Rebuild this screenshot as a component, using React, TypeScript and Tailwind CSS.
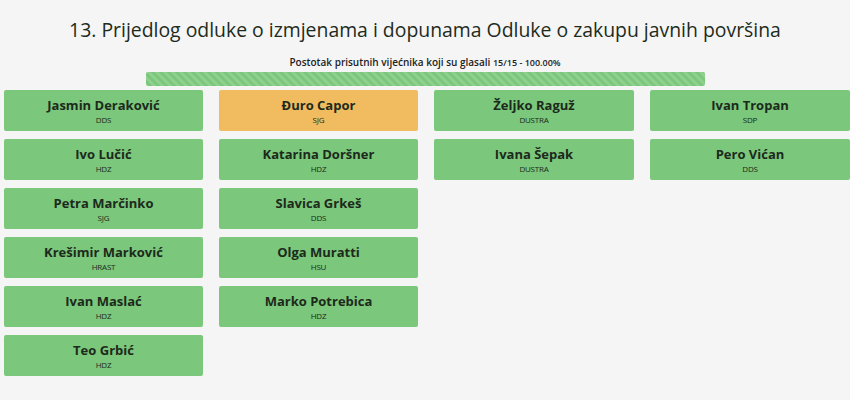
type Member = { name: string; party: string; abstain?: boolean };

const columns: Member[][] = [
  [
    { name: 'Jasmin Deraković', party: 'DDS' },
    { name: 'Ivo Lučić', party: 'HDZ' },
    { name: 'Petra Marčinko', party: 'SJG' },
    { name: 'Krešimir Marković', party: 'HRAST' },
    { name: 'Ivan Maslać', party: 'HDZ' },
    { name: 'Teo Grbić', party: 'HDZ' },
  ],
  [
    { name: 'Đuro Capor', party: 'SJG', abstain: true },
    { name: 'Katarina Doršner', party: 'HDZ' },
    { name: 'Slavica Grkeš', party: 'DDS' },
    { name: 'Olga Muratti', party: 'HSU' },
    { name: 'Marko Potrebica', party: 'HDZ' },
  ],
  [
    { name: 'Željko Raguž', party: 'DUSTRA' },
    { name: 'Ivana Šepak', party: 'DUSTRA' },
  ],
  [
    { name: 'Ivan Tropan', party: 'SDP' },
    { name: 'Pero Vićan', party: 'DDS' },
  ],
];

function VoteCard({ member }: { member: Member }) {
  return (
    <div
      className={`h-[41px] rounded-[2px] flex flex-col items-center justify-center text-[#1c2a1c] ${
        member.abstain ? 'bg-[#f0bc5f]' : 'bg-[#7bc77b]'
      }`}
    >
      <div className="text-[13px] font-bold leading-[16px] mt-[1px]">{member.name}</div>
      <div className="text-[8px] leading-[10px] mt-[2px] tracking-tight">{member.party}</div>
    </div>
  );
}

export default function App() {
  return (
    <div className="w-[850px] h-[400px] bg-[#f5f5f5] overflow-hidden font-['Open_Sans',sans-serif]">
      {/* Header */}
      <h1 className="pt-[16px] text-center text-[19.4px] font-normal leading-[28px] text-[#1d2b1d]">
        13. Prijedlog odluke o izmjenama i dopunama Odluke o zakupu javnih površina
      </h1>

      <div className="mt-[12px] text-center text-[10px] font-semibold leading-[12px] text-[#222]">
        Postotak prisutnih vijećnika koji su glasali{' '}
        <span className="text-[9px]">15/15 - 100.00%</span>
      </div>

      <div className="mx-auto mt-[3px] w-[559px] h-[14px] rounded-[2px] bg-[#7bc77b] bg-[linear-gradient(45deg,rgba(255,255,255,.15)_25%,transparent_25%,transparent_50%,rgba(255,255,255,.15)_50%,rgba(255,255,255,.15)_75%,transparent_75%,transparent)] bg-[length:8px_8px]" />

      {/* Votes */}
      <div className="mt-[4px] pl-[4px] grid grid-cols-[199px_199px_200px_200px] gap-x-[16px]">
        {columns.map((col, i) => (
          <div key={i} className="flex flex-col gap-[8px]">
            {col.map((m) => (
              <VoteCard key={m.name} member={m} />
            ))}
          </div>
        ))}
      </div>
    </div>
  );
}
